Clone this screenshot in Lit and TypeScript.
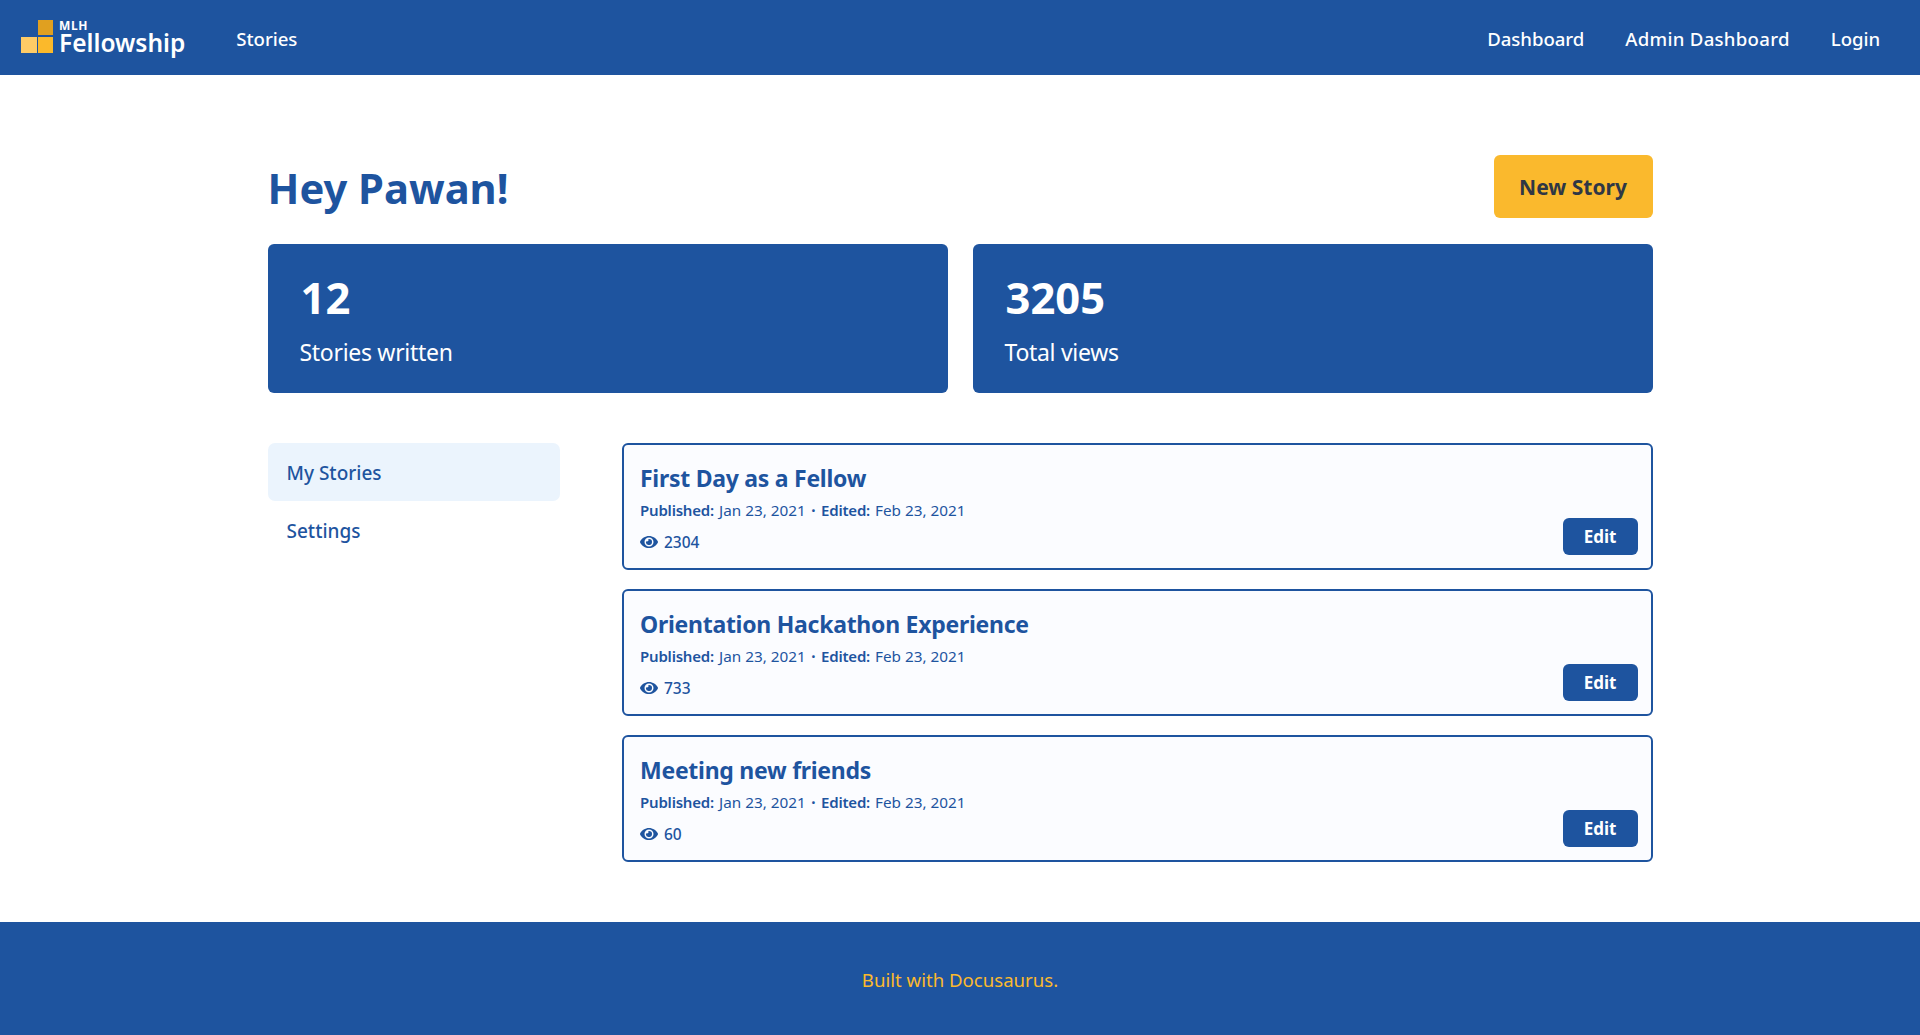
import { LitElement, html, css } from "lit";
import { customElement } from "lit/decorators.js";

const stories = [
  { title: "First Day as a Fellow", views: 2304 },
  { title: "Orientation Hackathon Experience", views: 733 },
  { title: "Meeting new friends", views: 60 },
];

@customElement("app-root")
export class AppRoot extends LitElement {
  static styles = css`
    :host { display: flex; flex-direction: column; min-height: 1035px; font-family: "Noto Sans", sans-serif; color: #1e549f; background: #fff; }
    * { box-sizing: border-box; }
    nav { height: 75px; background: #1e549f; display: flex; align-items: center; padding: 1px 20px 0 21px; color: #fff; font-size: 18.6px; font-weight: 500; letter-spacing: -0.05px; }
    .logo { display: flex; align-items: flex-end; gap: 6px; margin-right: 51px; margin-bottom: 2px; }
    .logo svg { display: block; margin-bottom: 2px; }
    .brand { display: flex; flex-direction: column; font-weight: 600; font-size: 24.5px; line-height: 24px; letter-spacing: 0; }
    .brand .mlh { font-size: 12px; font-weight: 700; line-height: 11px; letter-spacing: 0.6px; }
    .spacer { flex: 1; }
    nav a { margin: 0 20.5px; }
    nav a.admin { letter-spacing: 0.28px; }
    nav a.login { margin-right: 20px; }
    nav a.stories { margin-left: 0; }
    main { width: 1385px; margin: 0 auto; padding-top: 80px; flex: 1; }
    .head { display: flex; justify-content: space-between; align-items: center; height: 63px; }
    h1 { margin: 4px 0 0; font-size: 41.7px; font-weight: 700; line-height: 1.2; }
    .new { width: 159px; height: 63px; background: #fab92d; border-radius: 6px; color: #2f3745; font-weight: 700; font-size: 21px; display: flex; align-items: center; justify-content: center; }
    .stats { display: grid; grid-template-columns: 1fr 1fr; gap: 25px; margin-top: 26px; }
    .stat { height: 149px; background: #1e549f; color: #fff; border-radius: 6px; padding: 27px 32px; }
    .stat b { display: block; font-size: 43.5px; line-height: 52px; margin-left: 1px; }
    .stat span { font-size: 23px; letter-spacing: -0.3px; line-height: 36px; display: block; margin-top: 11px; }
    .cols { display: flex; margin-top: 50px; }
    aside { width: 292px; margin-right: 62px; font-size: 19px; font-weight: 500; }
    aside div { height: 58px; padding: 2px 19px 0; display: flex; align-items: center; border-radius: 7px; }
    aside .on { background: #ebf4fd; }
    .list { flex: 1; display: flex; flex-direction: column; gap: 19px; }
    .card { height: 127px; border: 2px solid #1e549f; border-radius: 6px; background: #fbfcff; padding: 17px 16px 0 16.5px; position: relative; }
    h3 { margin: 0; font-size: 23px; letter-spacing: -0.27px; font-weight: 700; line-height: 32px; }
    .meta { font-size: 15.3px; line-height: 24px; margin-top: 4px; display: flex; }
    .meta b { font-weight: 600; font-size: 15px; letter-spacing: -0.2px; margin-right: 5px; }
    .dot { margin: 0 5.5px; font-weight: 700; }
    .views { display: flex; align-items: center; gap: 6px; font-size: 15.5px; font-weight: 500; margin-top: 9px; }
    .edit { position: absolute; right: 13px; bottom: 13px; width: 75px; height: 37px; background: #1e549f; color: #fff; border-radius: 6px; font-weight: 700; font-size: 17px; display: flex; align-items: center; justify-content: center; }
    footer { height: 113px; padding-top: 2px; background: #1e549f; color: #fab92d; display: flex; align-items: center; justify-content: center; font-size: 18.6px; }
  `;
  render() {
    return html`
      <nav>
        <div class="logo">
          <svg width="32" height="33" viewBox="0 0 32 33"><rect x="17" y="0" width="15" height="15" fill="#e0a020"/><rect x="0" y="17" width="16" height="16" fill="#fecb66"/><rect x="17" y="17" width="15" height="16" fill="#fbb92b"/></svg>
          <div class="brand"><span class="mlh">MLH</span><span>Fellowship</span></div>
        </div>
        <a class="stories">Stories</a>
        <div class="spacer"></div>
        <a>Dashboard</a><a class="admin">Admin Dashboard</a><a class="login">Login</a>
      </nav>
      <main>
        <div class="head"><h1>Hey Pawan!</h1><div class="new">New Story</div></div>
        <div class="stats">
          <div class="stat"><b>12</b><span>Stories written</span></div>
          <div class="stat"><b>3205</b><span>Total views</span></div>
        </div>
        <div class="cols">
          <aside><div class="on">My Stories</div><div>Settings</div></aside>
          <div class="list">
            ${stories.map((s) => html`
              <div class="card">
                <h3>${s.title}</h3>
                <div class="meta"><b>Published:</b><span>Jan 23, 2021</span><span class="dot">·</span><b>Edited:</b><span>Feb 23, 2021</span></div>
                <div class="views">
                  <svg width="18" height="12" viewBox="0 0 576 384"><path fill="#1e549f" d="M572.5 177.400C518.300 71.600 410.900 0 288 0S57.700 71.600 3.500 177.400a32.400 32.400 0 0 0 0 29.200C57.700 312.400 165.100 384 288 384s230.300-71.600 284.500-177.400a32.400 32.400 0 0 0 0-29.200zM288 336a144 144 0 1 1 0-288 144 144 0 0 1 0 288zm0-240a95.300 95.300 0 0 0-25.300 3.800 47.900 47.900 0 0 1-66.900 66.900A95.800 95.800 0 1 0 288 96z"/></svg>
                  ${s.views}
                </div>
                <div class="edit">Edit</div>
              </div>`)}
          </div>
        </div>
      </main>
      <footer>Built with Docusaurus.</footer>
    `;
  }
}
